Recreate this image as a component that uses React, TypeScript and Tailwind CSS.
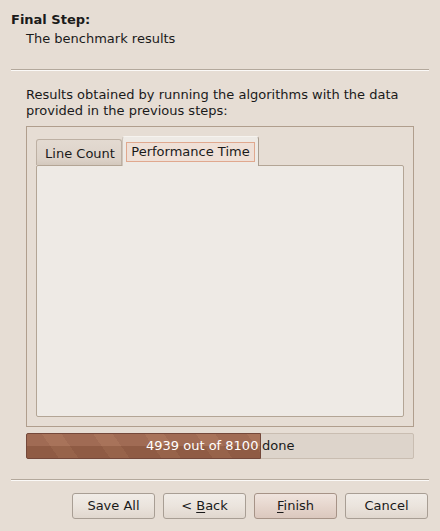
import React from "react";

const done = 4939;
const total = 8100;

function Separator() {
	return (
		<div className="mx-[11px] h-[2px] border-t border-t-[#b3a89c] border-b border-b-[#fbf9f7]" />
	);
}

function Button({
	label,
	mnemonic,
	isDefault = false,
}: {
	label: string;
	mnemonic?: number;
	isDefault?: boolean;
}) {
	const text =
		mnemonic === undefined ? (
			label
		) : (
			<span className="whitespace-pre">
				{label.slice(0, mnemonic)}
				<span className="underline underline-offset-[2px]">
					{label[mnemonic]}
				</span>
				{label.slice(mnemonic + 1)}
			</span>
		);
	return (
		<button
			type="button"
			className={
				isDefault
					? "flex h-[26px] w-[83px] items-center justify-center rounded-[3px] border border-[#a69387] bg-[linear-gradient(#efe4de,#e6d6cd_50%,#dbc8be)] text-[#1a1a1a]"
					: "flex h-[26px] w-[83px] items-center justify-center rounded-[3px] border border-[#a89e94] bg-[linear-gradient(#f1ece7,#ebe4dd_50%,#e0d7ce)] text-[#1a1a1a]"
			}
		>
			{text}
		</button>
	);
}

export default function App() {
	const pct = (done / total) * 100;
	const label = `${done} out of ${total} done`;

	return (
		<div className="flex h-[531px] w-[440px] flex-col bg-[#e6ddd4] font-['DejaVu_Sans',sans-serif] text-[13px] leading-4 text-[#1a1a1a]">
			<div className="pl-[11px] pt-[12px]">
				<div className="font-bold">Final Step:</div>
				<div className="mt-[3px] pl-[15px]">The benchmark results</div>
			</div>

			<div className="mt-[22px]">
				<Separator />
			</div>

			<div className="mx-[26px] mt-[16px]">
				<p>
					Results obtained by running the algorithms with the data
					<br />
					provided in the previous steps:
				</p>

				<div className="mt-[7px] flex h-[301px] flex-col border border-[#b09e8d] p-[9px]">
					<div className="flex h-[29px] items-end">
						<div className="flex h-[26px] w-[86px] items-center justify-center rounded-t-[3px] border border-b-0 border-[#bdb0a3] bg-[linear-gradient(#e3dad1,#ddd3c9_75%,#d3c8bd)] pl-[2px] pt-[3px]">
							Line Count
						</div>
						<div className="relative z-10 -mb-px flex h-[30px] w-[137px] items-start rounded-t-[3px] border border-b-0 border-l-[#cfc5bb] border-r-[#a99d90] border-t-[#f6f3ef] bg-[#eeeae5] px-[3px] pt-[5px]">
							<div className="flex h-[20px] w-full items-center justify-center border border-[#e0a88e] bg-[#efe0d7]">
								Performance Time
							</div>
						</div>
					</div>
					<div className="flex-1 rounded-[2px] border border-[#b3a595] bg-[#eeeae5]" />
				</div>

				<div className="relative mt-[6px] h-[26px] rounded-[2px] border border-[#c9bdb1] bg-[#ddd4cb]">
					<div className="flex h-full items-center justify-center text-[#1a1a1a]">
						{label}
					</div>
					<div
						className="absolute -left-px -top-px h-[26px] overflow-hidden rounded-l-[2px] border border-[#74483a] [background-image:linear-gradient(rgba(255,255,255,0.06),rgba(255,255,255,0.06)_50%,rgba(0,0,0,0.07)_50%,rgba(0,0,0,0.07)),repeating-linear-gradient(55deg,#9a6249_0px,#9a6249_26px,#a36a50_26px,#a36a50_42px)]"
						style={{ width: `${pct}%` }}
					>
						<div className="flex h-full w-[387px] items-center justify-center text-white">
							{label}
						</div>
					</div>
				</div>
			</div>

			<div className="mt-[20px]">
				<Separator />
			</div>

			<div className="mt-[12px] flex justify-end gap-[8px] pr-[12px]">
				<Button label="Save All" />
				<Button label="< Back" mnemonic={2} />
				<Button label="Finish" mnemonic={0} isDefault />
				<Button label="Cancel" />
			</div>
		</div>
	);
}
